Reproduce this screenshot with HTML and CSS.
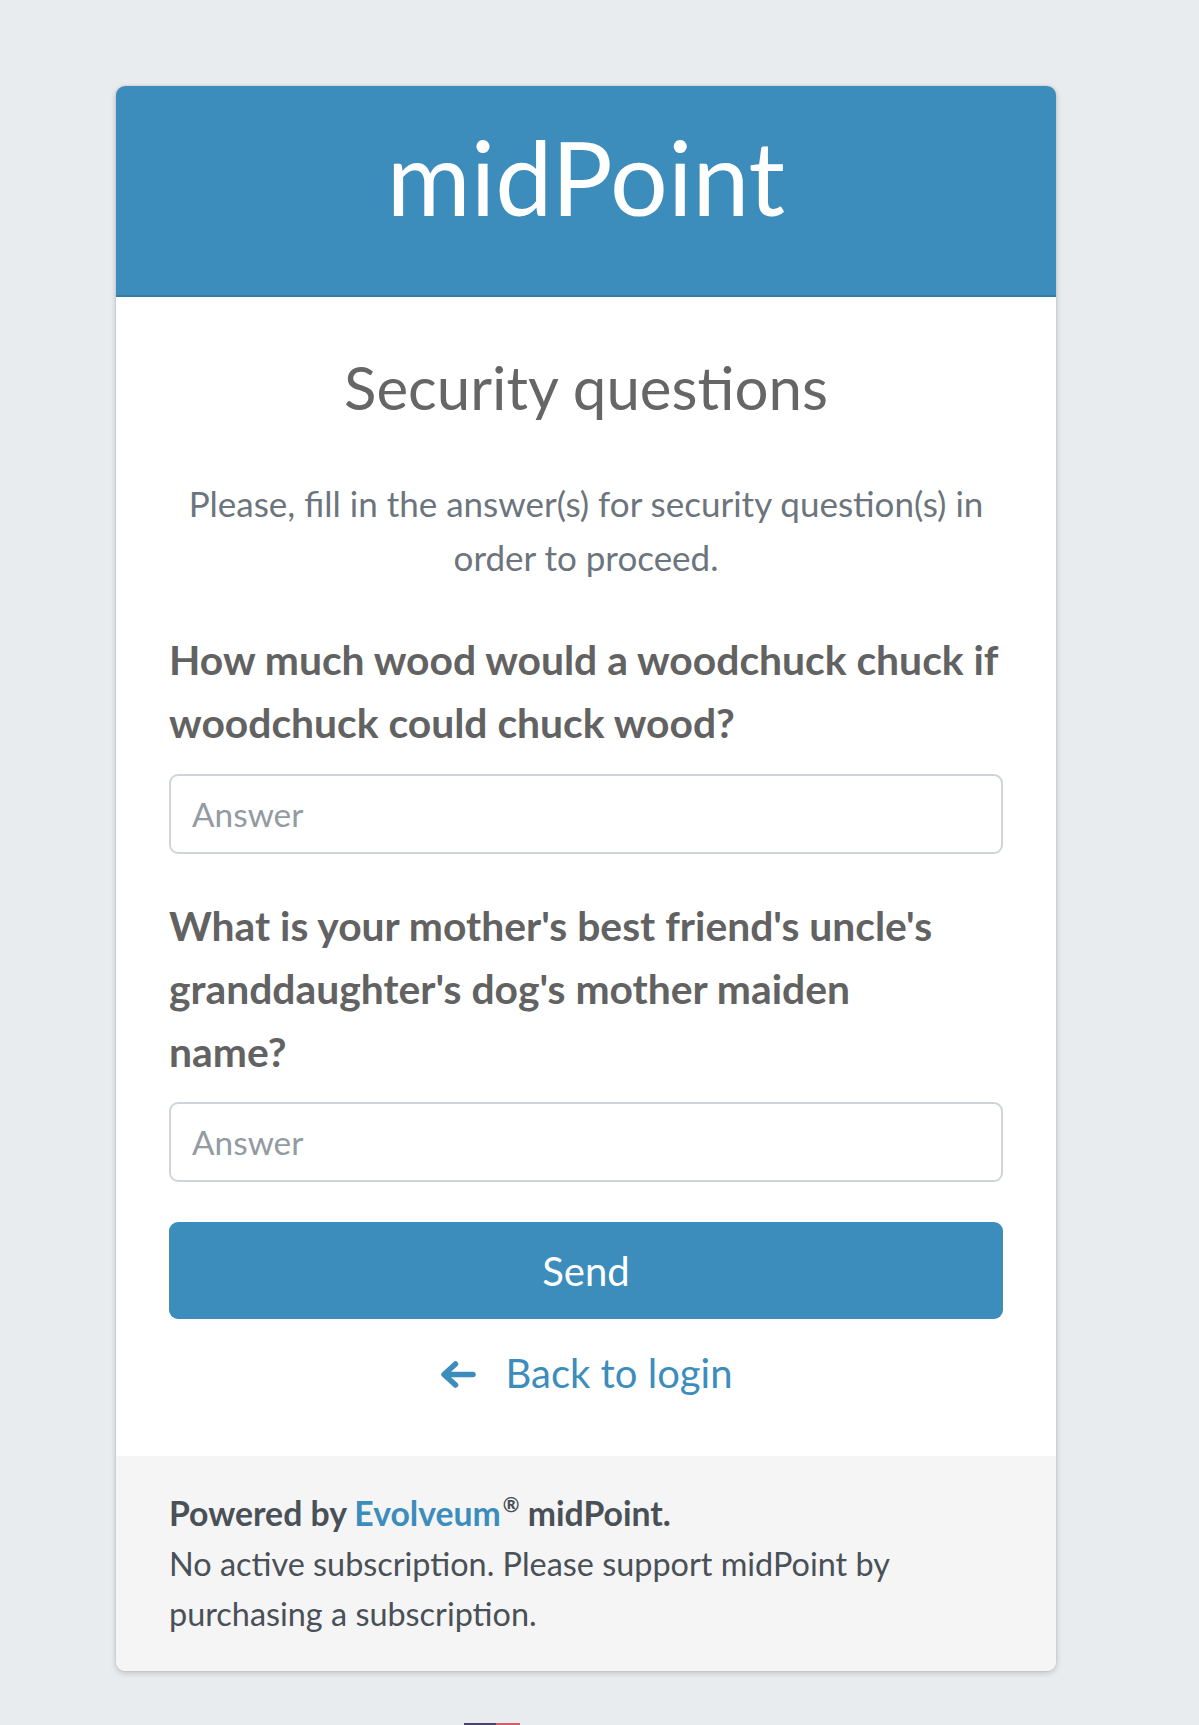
FILE: index.html
```html
<!DOCTYPE html>
<html lang="en">
<head>
<meta charset="utf-8">
<title>midPoint - Security questions</title>
<link rel="stylesheet" href="styles.css">
</head>
<body>
<div class="page">
  <main class="card">
    <header class="card-header">
      <h1 class="brand">midPoint</h1>
    </header>
    <section class="card-body">
      <h2 class="title">Security questions</h2>
      <p class="lead">Please, fill in the answer(s) for security question(s) in order to proceed.</p>
      <form class="form">
        <div class="question">
          <label class="q-label" for="q1">How much wood would a woodchuck chuck if woodchuck could chuck wood?</label>
          <input class="q-input" id="q1" type="text" placeholder="Answer">
        </div>
        <div class="question">
          <label class="q-label" for="q2">What is your mother's best friend's uncle's granddaughter's dog's mother maiden<br>name?</label>
          <input class="q-input" id="q2" type="text" placeholder="Answer">
        </div>
        <button class="btn-send" type="button">Send</button>
        <a class="back" href="#">
          <svg class="back-icon" viewBox="0 0 36 27" width="36" height="27" aria-hidden="true">
            <path d="M33 13.5 H4.5 M15.5 3 L4 13.5 L15.5 24" fill="none" stroke="currentColor" stroke-width="5.5" stroke-linecap="round" stroke-linejoin="round"/>
          </svg>
          <span>Back to login</span>
        </a>
      </form>
    </section>
    <footer class="card-footer">
      <div class="powered">Powered by <a class="evolveum" href="#">Evolveum</a><sup class="reg">®</sup> midPoint.</div>
      <div class="subscription">No active subscription. Please support midPoint by purchasing a subscription.</div>
    </footer>
  </main>
  <div class="lang">
    <span class="flag"><span class="flag-blue"></span><span class="flag-red"></span></span>
  </div>
</div>
</body>
</html>
```

FILE: styles.css
```css
* {
  box-sizing: border-box;
}

html, body {
  margin: 0;
  padding: 0;
  background: #e9ecef;
}

body {
  font-family: Lato, "Open Sans", "Noto Sans", sans-serif;
  color: #495057;
}

.page {
  padding: 86px 0 0 116px;
  height: 1725px;
  overflow: hidden;
}

.card {
  width: 940px;
  background: #fff;
  border-radius: 9px;
  box-shadow: 0 0 2px rgba(0, 0, 0, 0.15), 0 2px 6px rgba(0, 0, 0, 0.18);
  overflow: hidden;
}

.card-header {
  background: #3c8dbc;
  border-bottom: 2px solid #357ca5;
  padding: 31px 0 58px;
  text-align: center;
}

.brand {
  margin: 0;
  font-weight: 400;
  font-size: 102px;
  line-height: 120px;
  color: #fff;
}

.card-body {
  padding: 50.5px 53px 53px;
}

.title {
  margin: 0;
  text-align: center;
  font-weight: 400;
  font-size: 60px;
  line-height: 78px;
  color: #666;
}

.lead {
  margin: 50.5px 0 0;
  text-align: center;
  font-size: 35px;
  line-height: 54px;
  color: #6c757d;
}

.form {
  display: flex;
  flex-direction: column;
}

.question {
  display: flex;
  flex-direction: column;
  margin-top: 44px;
}

.question + .question {
  margin-top: 40px;
}

.q-label {
  font-weight: 700;
  font-size: 40.8px;
  line-height: 63.3px;
  color: #626262;
  margin-bottom: 19px;
}

.q-input {
  width: 100%;
  height: 80px;
  border: 2px solid #ced4da;
  border-radius: 9px;
  padding: 0 21px;
  font-family: inherit;
  font-size: 33.4px;
  color: #495057;
  background: #fff;
  outline: none;
}

.q-input::placeholder {
  color: #939ba2;
}

.btn-send {
  margin-top: 40px;
  height: 97px;
  width: 100%;
  border: 0;
  border-radius: 9px;
  background: #3c8dbc;
  color: #fff;
  font-family: inherit;
  font-size: 40px;
  cursor: pointer;
}

.back {
  margin-top: 24px;
  align-self: center;
  display: flex;
  align-items: center;
  gap: 30px;
  color: #3c8dbc;
  text-decoration: none;
  font-size: 40px;
  line-height: 60px;
}

.back-icon {
  display: block;
  margin-top: 3px;
}

.card-footer {
  background: #f5f5f5;
  padding: 31.5px 53px 31px;
  font-size: 32.4px;
  line-height: 50.6px;
  color: #495057;
}

.powered {
  font-weight: 700;
  font-size: 33.75px;
}

.evolveum {
  color: #3c8dbc;
  text-decoration: none;
}

.reg {
  font-size: 0.6em;
  line-height: 0;
  vertical-align: 0.7em;
  margin-left: 2px;
}

.lang {
  margin-top: 52px;
  padding-left: 348px;
}

.flag {
  display: flex;
  width: 56px;
  height: 40px;
}

.flag-blue {
  width: 32px;
  background: #4b4369;
}

.flag-red {
  flex: 1;
  background: #cf5f69;
}
```
